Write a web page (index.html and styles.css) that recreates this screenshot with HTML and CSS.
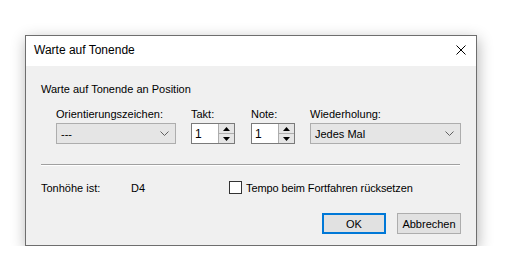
FILE: index.html
```html
<!DOCTYPE html>
<html lang="de">
<head>
<meta charset="utf-8">
<title>Warte auf Tonende</title>
<link rel="stylesheet" href="styles.css">
</head>
<body>
<div class="window">
  <div class="titlebar">
    <span class="title">Warte auf Tonende</span>
    <svg class="close" width="10" height="10" viewBox="0 0 10 10"><path d="M0.5 0.5 L9.5 9.5 M9.5 0.5 L0.5 9.5" stroke="#000" stroke-width="1" fill="none"/></svg>
  </div>
  <div class="content">
    <div class="group-label">Warte auf Tonende an Position</div>
    <div class="fields">
      <div class="field f-orient">
        <div class="label">Orientierungszeichen:</div>
        <div class="combo"><span>---</span><svg class="chev" width="9" height="5" viewBox="0 0 9 5"><path d="M0.5 0.5 L4.5 4.5 L8.5 0.5" stroke="#606060" fill="none"/></svg></div>
      </div>
      <div class="field f-takt">
        <div class="label">Takt:</div>
        <div class="spin"><span class="spin-val">1</span><div class="spin-btns"><div class="sb"><svg width="7" height="4" viewBox="0 0 7 4"><path d="M0 4 L3.5 0 L7 4Z" fill="#000"/></svg></div><div class="sb"><svg width="7" height="4" viewBox="0 0 7 4"><path d="M0 0 L3.5 4 L7 0Z" fill="#000"/></svg></div></div></div>
      </div>
      <div class="field f-note">
        <div class="label">Note:</div>
        <div class="spin"><span class="spin-val">1</span><div class="spin-btns"><div class="sb"><svg width="7" height="4" viewBox="0 0 7 4"><path d="M0 4 L3.5 0 L7 4Z" fill="#000"/></svg></div><div class="sb"><svg width="7" height="4" viewBox="0 0 7 4"><path d="M0 0 L3.5 4 L7 0Z" fill="#000"/></svg></div></div></div>
      </div>
      <div class="field f-wied">
        <div class="label">Wiederholung:</div>
        <div class="combo"><span>Jedes Mal</span><svg class="chev" width="9" height="5" viewBox="0 0 9 5"><path d="M0.5 0.5 L4.5 4.5 L8.5 0.5" stroke="#606060" fill="none"/></svg></div>
      </div>
    </div>
    <div class="separator"></div>
    <div class="info-row">
      <span class="pitch-label">Tonhöhe ist:</span>
      <span class="pitch-val">D4</span>
      <span class="check"></span>
      <span class="check-label">Tempo beim Fortfahren rücksetzen</span>
    </div>
    <div class="buttons">
      <div class="btn btn-default">OK</div>
      <div class="btn">Abbrechen</div>
    </div>
  </div>
</div>
</body>
</html>
```
FILE: styles.css
```css
html, body {
  margin: 0;
  padding: 0;
  background: #ffffff;
}
body {
  padding: 35px 0 0 25px;
  font-family: "Liberation Sans", Arial, sans-serif;
  font-size: 11px;
  color: #000;
}
.window {
  width: 450px;
  border: 1px solid #6e6e6e;
  background: #f0f0f0;
  box-shadow: 1px 4px 14px rgba(0,0,0,0.3);
}
.titlebar {
  height: 30px;
  background: #ffffff;
  display: flex;
  align-items: center;
  justify-content: space-between;
  padding: 0 10px 0 8px;
}
.title {
  font-family: "Liberation Sans", Arial, sans-serif;
  font-size: 12px;
  line-height: 16px;
  margin-top: -2px;
}
.close {
  display: block;
  margin-top: -3px;
}
.content {
  padding: 17px 15px 11px 15px;
}
.group-label {
  line-height: 13px;
}
.fields {
  display: flex;
  padding-left: 15px;
  margin-top: 12px;
}
.field {
  display: flex;
  flex-direction: column;
}
.label {
  line-height: 13px;
  margin-bottom: 2px;
}
.f-orient { width: 120px; margin-right: 15px; }
.f-takt { width: 44px; margin-right: 16px; }
.f-note { width: 44px; margin-right: 15px; }
.f-wied { width: 151px; }
.combo {
  height: 21px;
  box-sizing: border-box;
  border: 1px solid #adadad;
  background: #e5e5e5;
  display: flex;
  align-items: center;
  justify-content: space-between;
  padding: 0 6px 0 4px;
}
.chev { display: block; }
.spin {
  height: 21px;
  box-sizing: border-box;
  border: 1px solid #7a7a7a;
  background: #fff;
  display: flex;
  align-items: stretch;
}
.spin-val {
  flex: 1;
  display: flex;
  align-items: center;
  padding-left: 3px;
  font-size: 12px;
}
.spin-btns {
  width: 15px;
  display: flex;
  flex-direction: column;
  border-left: 1px solid #adadad;
}
.sb {
  flex: 1;
  background: #e5e5e5;
  display: flex;
  align-items: center;
  justify-content: center;
}
.sb + .sb { border-top: 1px solid #adadad; }
.sb svg { display: block; }
.separator {
  margin-top: 20px;
  height: 1px;
  background: #a0a0a0;
  border-bottom: 1px solid #ffffff;
  width: 419px;
}
.info-row {
  display: flex;
  align-items: center;
  height: 13px;
  margin-top: 15px;
}
.pitch-label { width: 90px; }
.pitch-val { width: 98px; }
.check {
  width: 13px;
  height: 13px;
  box-sizing: border-box;
  border: 1px solid #333;
  background: #fff;
  margin-right: 4px;
}
.check-label { letter-spacing: -0.1px; }
.buttons {
  display: flex;
  justify-content: flex-end;
  gap: 11px;
  margin-top: 19px;
  width: 420px;
}
.btn {
  width: 64px;
  height: 21px;
  box-sizing: border-box;
  border: 1px solid #adadad;
  background: #e1e1e1;
  display: flex;
  align-items: center;
  justify-content: center;
  font-size: 11px;
}
.btn-default {
  border: 2px solid #0078d7;
}
```
